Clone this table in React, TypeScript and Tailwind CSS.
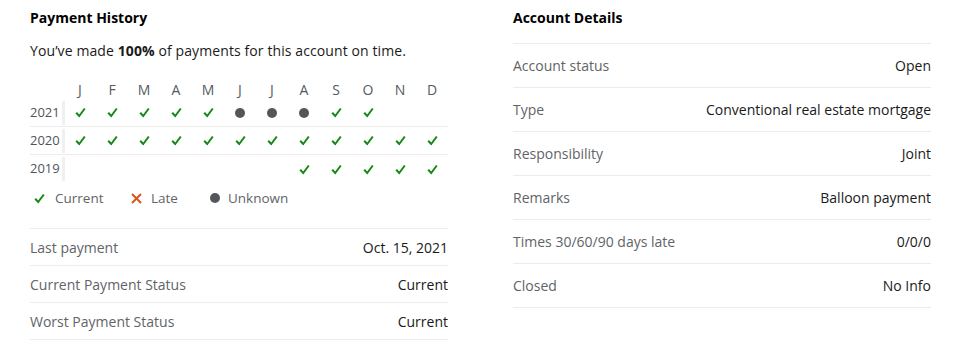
const months = ['J', 'F', 'M', 'A', 'M', 'J', 'J', 'A', 'S', 'O', 'N', 'D']

type Mark = 'ok' | 'late' | 'unknown' | null

const history: { year: string; marks: Mark[] }[] = [
  {
    year: '2021',
    marks: ['ok', 'ok', 'ok', 'ok', 'ok', 'unknown', 'unknown', 'unknown', 'ok', 'ok', null, null],
  },
  {
    year: '2020',
    marks: ['ok', 'ok', 'ok', 'ok', 'ok', 'ok', 'ok', 'ok', 'ok', 'ok', 'ok', 'ok'],
  },
  {
    year: '2019',
    marks: [null, null, null, null, null, null, null, 'ok', 'ok', 'ok', 'ok', 'ok'],
  },
]

const paymentRows = [
  { label: 'Last payment', value: 'Oct. 15, 2021' },
  { label: 'Current Payment Status', value: 'Current' },
  { label: 'Worst Payment Status', value: 'Current' },
]

const accountRows = [
  { label: 'Account status', value: 'Open' },
  { label: 'Type', value: 'Conventional real estate mortgage' },
  { label: 'Responsibility', value: 'Joint' },
  { label: 'Remarks', value: 'Balloon payment' },
  { label: 'Times 30/60/90 days late', value: '0/0/0' },
  { label: 'Closed', value: 'No Info' },
]

function Check() {
  return (
    <svg width="11" height="11" viewBox="0 0 11 11" fill="none">
      <path d="M1.2 5.8 L4.2 9 L9.8 1.5" stroke="#148a14" strokeWidth="2" />
    </svg>
  )
}

function Cross() {
  return (
    <svg width="11" height="11" viewBox="0 0 11 11" fill="none">
      <path d="M1 1 L10 10 M10 1 L1 10" stroke="#d9541e" strokeWidth="2" />
    </svg>
  )
}

function Dot() {
  return <span className="block h-[10px] w-[10px] rounded-full bg-[#53575b]" />
}

function MarkIcon({ mark }: { mark: Mark }) {
  if (mark === 'ok') return <Check />
  if (mark === 'late') return <Cross />
  if (mark === 'unknown') return <Dot />
  return null
}

export default function App() {
  return (
    <div
      className="flex gap-[65px] bg-white pl-[30px] pt-[8px] text-[14px] text-[#1a1a1a]"
      style={{ fontFamily: '"Open Sans", "Liberation Sans", sans-serif' }}
    >
      <section className="w-[418px]">
        <h2 className="text-[14px] font-bold leading-[20px] text-black">Payment History</h2>
        <p className="mt-[13px] leading-[20px] tracking-[0.1px] text-[#1a1a1a]">
          You’ve made <b>100%</b> of payments for this account on time.
        </p>

        <div className="mt-[18px]">
          <div className="flex h-[20px] items-center pl-[34px] text-[14px] text-[#555a5e]">
            {months.map((m, i) => (
              <span key={i} className="w-[32px] text-center">
                {m}
              </span>
            ))}
          </div>
          {history.map((row, r) => (
            <div
              key={row.year}
              className={`flex h-[28px] items-center ${r < history.length - 1 ? 'border-b border-[#ececec]' : ''}`}
            >
              <span className="w-[32px] text-[13px] text-[#4f5459]">{row.year}</span>
              <span className="h-[24px] w-[3px] bg-[#f0f0f0]" />
              {row.marks.map((mark, i) => (
                <span key={i} className="flex w-[32px] items-center justify-center">
                  <MarkIcon mark={mark} />
                </span>
              ))}
            </div>
          ))}
        </div>

        <div className="mt-[5px] flex h-[20px] items-center pl-[4px] text-[13.5px] text-[#5f6468]">
          <div className="flex w-[97px] items-center gap-[10px]">
            <Check />
            <span>Current</span>
          </div>
          <div className="flex w-[79px] items-center gap-[9px]">
            <Cross />
            <span>Late</span>
          </div>
          <div className="flex items-center gap-[8px]">
            <Dot />
            <span>Unknown</span>
          </div>
        </div>

        <div className="mt-[20px] border-b border-[#ececec]">
          {paymentRows.map((row) => (
            <div
              key={row.label}
              className="flex h-[37px] items-center justify-between border-t border-[#ececec]"
            >
              <span className="text-[#5f6468]">{row.label}</span>
              <span className="text-[#1a1a1a]">{row.value}</span>
            </div>
          ))}
        </div>
      </section>

      <section className="w-[418px]">
        <h2 className="text-[14px] font-bold leading-[20px] text-black">Account Details</h2>
        <div className="mt-[15px] border-b border-[#ececec]">
          {accountRows.map((row) => (
            <div
              key={row.label}
              className="flex h-[44px] items-center justify-between border-t border-[#ececec]"
            >
              <span className="text-[#5f6468]">{row.label}</span>
              <span className="text-[#1a1a1a]">{row.value}</span>
            </div>
          ))}
        </div>
      </section>
    </div>
  )
}
